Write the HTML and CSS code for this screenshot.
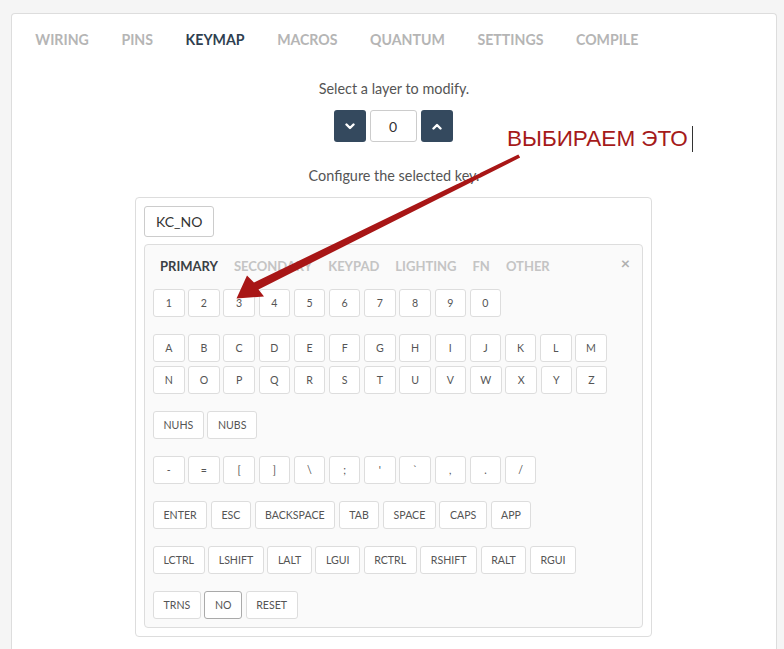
FILE: index.html
```html
<!DOCTYPE html>
<html lang="en">
<head>
    <meta charset="UTF-8">
    <title>Keyboard Firmware Builder - Keymap</title>
    <link rel="stylesheet" href="styles.css">
</head>
<body>

    <div class="card">
        <ul class="tabs">
            <li>WIRING</li>
            <li>PINS</li>
            <li class="active">KEYMAP</li>
            <li>MACROS</li>
            <li>QUANTUM</li>
            <li>SETTINGS</li>
            <li>COMPILE</li>
        </ul>

        <p class="hint hint-layer">Select a layer to modify.</p>
        <div class="layer-picker">
            <button class="layer-btn">
                <svg width="10" height="7" viewBox="0 0 10 7"><path d="M1.5 1.5 L5 5 L8.5 1.5" fill="none" stroke="#fff" stroke-width="2.4" stroke-linecap="round" stroke-linejoin="round"/></svg>
            </button>
            <input class="layer-input" type="text" value="0">
            <button class="layer-btn">
                <svg width="10" height="7" viewBox="0 0 10 7"><path d="M1.5 5.5 L5 2 L8.5 5.5" fill="none" stroke="#fff" stroke-width="2.4" stroke-linecap="round" stroke-linejoin="round"/></svg>
            </button>
        </div>

        <p class="hint hint-key">Configure the selected key.</p>
        <div class="key-editor">
            <div class="key-current">KC_NO</div>
            <div class="key-picker">
                <div class="picker-tabs">
                    <span class="picker-tab active">PRIMARY</span>
                    <span class="picker-tab">SECONDARY</span>
                    <span class="picker-tab">KEYPAD</span>
                    <span class="picker-tab">LIGHTING</span>
                    <span class="picker-tab">FN</span>
                    <span class="picker-tab">OTHER</span>
                    <span class="picker-close">&times;</span>
                </div>
                <div id="keyGroups"></div>
            </div>
        </div>
    </div>

    <!-- annotation drawn over the screenshot -->
    <svg class="annotation" width="784" height="649" viewBox="0 0 784 649">
        <text x="507" y="146" class="annotation-text">ВЫБИРАЕМ ЭТО</text>
        <line x1="692.5" y1="126" x2="692.5" y2="152" stroke="#333" stroke-width="1"/>
        <polygon points="518.3,154.6 520.2,157.6 258.5,289.5 264,296.5 236.5,298.5 247,275.5 254,282.5" fill="#a81616"/>
    </svg>

    <script>
        const groups = [
            [["1", "2", "3", "4", "5", "6", "7", "8", "9", "0"]],
            [["A", "B", "C", "D", "E", "F", "G", "H", "I", "J", "K", "L", "M"],
             ["N", "O", "P", "Q", "R", "S", "T", "U", "V", "W", "X", "Y", "Z"]],
            [["NUHS", "NUBS"]],
            [["-", "=", "[", "]", "\\", ";", "'", "`", ",", ".", "/"]],
            [["ENTER", "ESC", "BACKSPACE", "TAB", "SPACE", "CAPS", "APP"]],
            [["LCTRL", "LSHIFT", "LALT", "LGUI", "RCTRL", "RSHIFT", "RALT", "RGUI"]],
            [["TRNS", "NO", "RESET"]]
        ];

        const holder = document.getElementById("keyGroups");

        groups.forEach(rows => {
            const group = document.createElement("div");
            group.classList.add("key-group");
            rows.forEach(keys => {
                const row = document.createElement("div");
                row.classList.add("key-row");
                keys.forEach(name => {
                    const key = document.createElement("button");
                    key.classList.add("key");
                    if (name === "NO") key.classList.add("selected");
                    key.textContent = name;
                    row.appendChild(key);
                });
                group.appendChild(row);
            });
            holder.appendChild(group);
        });
    </script>

</body>
</html>
```

FILE: styles.css
```css
body {
    margin: 13px 7px 0 11px;
    background-color: #f5f5f5;
    font-family: Lato, "Open Sans", sans-serif;
    color: #333;
    overflow: hidden;
    height: 636px;
}

.card {
    background: white;
    border: 1px solid #ddd;
    border-bottom: none;
    border-radius: 4px 4px 0 0;
    height: 700px;
}

.tabs {
    list-style: none;
    display: flex;
    margin: 0;
    padding: 16px 0 0 7px;
}

.tabs li {
    padding: 0 16.3px;
    font-size: 14.15px;
    font-weight: bold;
    line-height: 19px;
    color: #b5b5b5;
}

.tabs li.active {
    color: #2f3f50;
}

.hint {
    margin: 0;
    text-align: center;
    font-size: 14.4px;
    line-height: 18px;
    color: #555;
}

.hint-layer {
    margin-top: 31px;
}

.hint-key {
    margin-top: 25px;
}

.layer-picker {
    display: flex;
    justify-content: center;
    gap: 4px;
    margin-top: 12px;
    padding-right: 2px;
}

.layer-btn {
    width: 32px;
    height: 32px;
    padding: 0;
    border: none;
    border-radius: 3px;
    background-color: #34495e;
    display: flex;
    align-items: center;
    justify-content: center;
}

.layer-input {
    box-sizing: border-box;
    width: 47px;
    height: 32px;
    border: 1px solid #ccc;
    border-radius: 3px;
    text-align: center;
    font-family: Lato, sans-serif;
    font-size: 14px;
    color: #333;
    padding: 0;
}

.key-editor {
    box-sizing: border-box;
    width: 517px;
    margin: 12px auto 0;
    padding: 8px;
    border: 1px solid #ddd;
    border-radius: 4px;
    background: white;
    position: relative;
    left: -0.5px;
}

.key-current {
    display: inline-block;
    padding: 5px 11px;
    font-size: 14px;
    line-height: 19px;
    border: 1px solid #ccc;
    border-radius: 3px;
    color: #333;
    margin-bottom: 7px;
}

.key-picker {
    background-color: #fafafa;
    border: 1px solid #ddd;
    border-radius: 4px;
    padding: 8px;
}

.picker-tabs {
    display: flex;
    gap: 16px;
    padding: 4px 0 0 7px;
    margin-bottom: 14px;
    line-height: 18px;
    position: relative;
}

.picker-tab {
    font-size: 13px;
    font-weight: bold;
    color: #c4c4c4;
}

.picker-tab.active {
    color: #3a3f44;
}

.picker-close {
    position: absolute;
    right: 4px;
    top: 1px;
    font-size: 16px;
    font-weight: bold;
    color: #b0b0b0;
}

.key-group {
    display: flex;
    flex-direction: column;
    gap: 4px;
    margin-bottom: 17px;
}

.key-group:last-child {
    margin-bottom: 0;
}

.key-row {
    display: flex;
    gap: 3.7px;
}

.key {
    box-sizing: border-box;
    min-width: 31.5px;
    height: 28px;
    padding: 0 9.5px;
    font-family: Lato, sans-serif;
    font-size: 10.6px;
    color: #555;
    background: white;
    border: 1px solid #ddd;
    border-radius: 3px;
}

.key.selected {
    border-color: #aaa;
}

.annotation {
    position: absolute;
    top: 0;
    left: 0;
    pointer-events: none;
}

.annotation-text {
    font-family: "Liberation Sans", Arial, sans-serif;
    font-size: 22.5px;
    fill: #a51a1a;
}
```
